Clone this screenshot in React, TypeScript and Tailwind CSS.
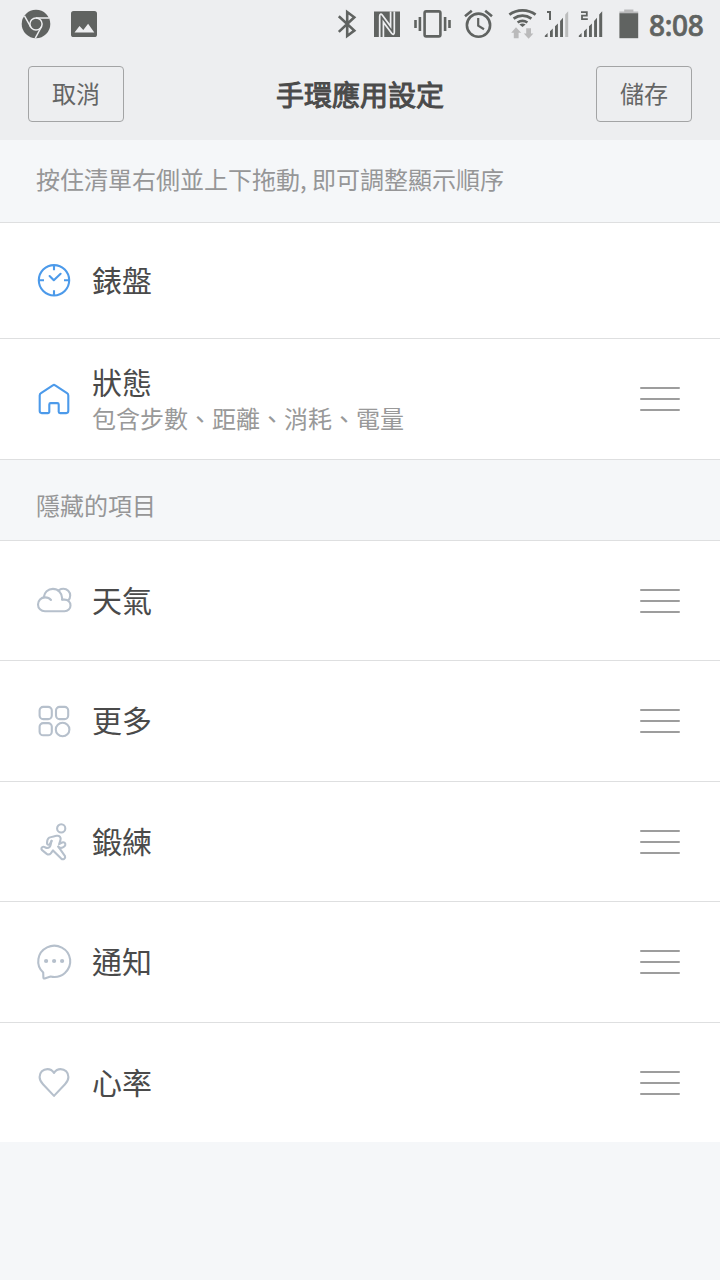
import React from 'react'

type IconProps = {
    className?: string
}

type Item = {
    title: string
    description?: string
    icon: React.FC<IconProps>
    active?: boolean
    draggable?: boolean
    height: string
}

const iconBase = {
    viewBox: '0 0 40 40',
    width: 40,
    height: 40,
    fill: 'none',
    stroke: 'currentColor',
    strokeWidth: 2.1,
    strokeLinecap: 'round' as const,
    strokeLinejoin: 'round' as const,
}

const ClockIcon = ({ className }: IconProps) => (
    <svg {...iconBase} viewBox="0 1 40 40" className={className}>
        <circle cx="20" cy="20.3" r="15.2" />
        <path strokeLinecap="butt" d="M20 5.3v5M20 30.3v5M5 20.3h5M30 20.3h5" />
        <path d="M15.6 16l4.2 4.2 6.8-6.4" />
    </svg>
)

const HomeIcon = ({ className }: IconProps) => (
    <svg {...iconBase} className={className}>
        <path d="M18.8 6.4a2 2 0 0 1 2.4 0l11.8 7.7a2.8 2.8 0 0 1 1.3 2.3v15.7a2 2 0 0 1-2 2h-6.2a1.4 1.4 0 0 1-1.4-1.4v-7.2a1.4 1.4 0 0 0-1.4-1.4h-6.6a1.4 1.4 0 0 0-1.4 1.4v7.2a1.4 1.4 0 0 1-1.4 1.4H7.7a2 2 0 0 1-2-2V16.4A2.8 2.8 0 0 1 7 14.1z" />
    </svg>
)

const CloudIcon = ({ className }: IconProps) => (
    <svg {...iconBase} viewBox="0 1 40 40" className={className}>
        <path d="M17 20C15.6 18.2 13.5 17.4 11 17.4c-4 0-7 3-7 7s3 6.9 7 6.9h19.6c3.3 0 5.9-2.6 5.9-5.9s-2.6-5.8-5.9-5.8h-2.6" />
        <path d="M9.7 17.3c.5-5 4.3-8.4 9.2-8.4 5.2 0 9.3 4.2 9.3 9.6v1" />
        <path d="M25 10.1c1.4-.9 2.8-1.3 4.4-1.3 3.8 0 6.8 3 6.8 6.7 0 2-.7 3.6-1.9 4.8" />
    </svg>
)

const MoreIcon = ({ className }: IconProps) => (
    <svg {...iconBase} className={className}>
        <rect x="5.6" y="5.9" width="12.2" height="12.2" rx="3.6" />
        <rect x="22" y="5.9" width="12.2" height="12.2" rx="3.6" />
        <rect x="5.6" y="22.1" width="12.2" height="12.2" rx="3.6" />
        <circle cx="28.6" cy="28.5" r="6.8" />
    </svg>
)

const RunIcon = ({ className }: IconProps) => (
    <svg {...iconBase} viewBox="-0.4 0.6 40 40" className={className}>
        <circle cx="26.8" cy="7" r="4.1" />
        <path d="M17.2 19.4l-2 3.6c-1.2.8-2.7.1-2.6-1.4.1-2.6.2-4.4 2.2-5.4 2-.9 4.6-1.1 7.4-1.8 2.8-.6 4.7 1.6 3.9 4l-1.4 4.4 3-1.7c1.7-.8 3.6.5 3.2 2.5-.4 1.8-3.1 3.1-5 2.9-1-.1-1.7-.7-2-1.3" />
        <path d="M17.2 19.4l-1.1 4.4c-.5 1.9-1.6 2.7-3.3 2.8-1.4.1-2.2-1.3-4-1.2-1.8.2-2.4 2.2-1.1 3.4l4.6 3.6c1.4 1 3.1.7 4.1-.5l2.2-2.9 8.2 8.2c2 1.6 4.7-.2 3.8-2.5l-6.7-9.4" />
    </svg>
)

const ChatIcon = ({ className }: IconProps) => (
    <svg {...iconBase} className={className}>
        <path d="M9.2 30.6A16 15.6 0 1 1 16.6 34.5L10.7 36.4c-.8.2-1.3-.2-1.3-.9z" />
        <g fill="currentColor" stroke="none">
            <circle cx="12.1" cy="19" r="2.1" />
            <circle cx="20.1" cy="19" r="2.1" />
            <circle cx="28.1" cy="19" r="2.1" />
        </g>
    </svg>
)

const HeartIcon = ({ className }: IconProps) => (
    <svg {...iconBase} viewBox="0 1 40 40" className={className}>
        <path d="M20 10.9c-1.6-2.5-3.9-3.8-6.6-3.8-4.4 0-7.8 3.4-7.8 7.9 0 3 1.2 5 3.4 7.3L20 33.9l11-11.6c2.2-2.3 3.4-4.3 3.4-7.3 0-4.5-3.4-7.9-7.8-7.9-2.7 0-5 1.3-6.6 3.8z" />
    </svg>
)

const DragHandle = () => (
    <svg width="40" height="26" viewBox="0 0 40 26" className="text-[#9d9d9d]" stroke="currentColor" strokeWidth="2" strokeLinecap="round">
        <path d="M1 2h38M1 13h38M1 24h38" />
    </svg>
)

const visibleItems: Item[] = [
    { title: '錶盤', icon: ClockIcon, active: true, height: 'h-[116px]' },
    {
        title: '狀態',
        description: '包含步數、距離、消耗、電量',
        icon: HomeIcon,
        active: true,
        draggable: true,
        height: 'h-[121px]',
    },
]

const hiddenItems: Item[] = [
    { title: '天氣', icon: CloudIcon, draggable: true, height: 'h-[120px]' },
    { title: '更多', icon: MoreIcon, draggable: true, height: 'h-[121px]' },
    { title: '鍛練', icon: RunIcon, draggable: true, height: 'h-[120px]' },
    { title: '通知', icon: ChatIcon, draggable: true, height: 'h-[121px]' },
    { title: '心率', icon: HeartIcon, draggable: true, height: 'h-[120px]' },
]

const ListItem = ({ item }: { item: Item }) => {
    const Icon = item.icon

    return (
        <li className={`flex items-center border-t border-[#dedfe0] bg-white pl-[34px] pr-10 ${item.height}`}>
            <Icon className={item.active ? 'text-[#4c9aea]' : 'text-[#b6c0cc]'} />
            <div className={`ml-[18px] mr-auto ${item.description ? 'pt-px' : 'pb-1'}`}>
                <p className="text-[30px] leading-9 text-[#4a4a4a]">{item.title}</p>
                {item.description && (
                    <p className="mt-px text-2xl leading-9 text-[#999999]">{item.description}</p>
                )}
            </div>
            {item.draggable && (
                <button aria-label="drag">
                    <DragHandle />
                </button>
            )}
        </li>
    )
}

const StatusBar = () => (
    <div className="flex h-12 text-[#606361]">
        <svg className="ml-5" width="32" height="48" viewBox="0 0 32 48" fill="none">
            <circle cx="16" cy="24" r="14.3" fill="currentColor" />
            <g stroke="#edeef0" strokeWidth="1.5">
                <circle cx="16" cy="24" r="6.1" />
                <path d="M16 17.9h13M10.7 27L4.5 15.8M21.3 27l-6 11.2" />
            </g>
        </svg>
        <svg className="ml-4" width="32" height="48" viewBox="0 0 32 48">
            <rect x="3" y="11" width="26" height="26" rx="2.6" fill="currentColor" />
            <path d="M6.5 32.4l5-6.5 3.8 4 4.8-6.2 6.2 8.7z" fill="#edeef0" />
        </svg>

        <svg className="ml-auto" width="26" height="48" viewBox="0 0 26 48" fill="none" stroke="currentColor" strokeWidth="2.6">
            <path d="M4.8 16.3L20.3 30.6 13.2 36V12l7.1 5.3L4.8 31.9" />
        </svg>
        <svg className="ml-3" width="30" height="48" viewBox="0 0 30 48">
            <path d="M2 11.5h26V37H2z" fill="currentColor" />
            <g fill="none" stroke="#edeef0" strokeWidth="1.7">
                <path d="M18.6 11.5v14.8L10.4 15.2c-1.5-2-2.7-1-2.7 1V37" />
                <path d="M11.4 37V22.2l8.2 11.1c1.5 2 2.7 1 2.7-1V11.5" />
            </g>
        </svg>
        <svg className="ml-2.5" width="41" height="48" viewBox="0 0 41 48" fill="none" stroke="currentColor" strokeWidth="2.6">
            <rect x="12.6" y="11.4" width="15.8" height="25" rx="1.6" />
            <path d="M7.9 17v14M3.5 20v8M33.1 17v14M37.5 20v8" />
        </svg>
        <svg className="ml-2.5" width="32" height="48" viewBox="0 0 32 48" fill="none" stroke="currentColor" strokeWidth="2.6">
            <circle cx="15.5" cy="25.2" r="11.6" />
            <path d="M15.2 18v7.6l5.8 3.6" strokeWidth="2.2" />
            <path d="M2 16.3l6.8-5.6M29 16.3l-6.8-5.6" />
        </svg>
        <svg className="ml-[11px]" width="33" height="48" viewBox="0 0 33 48" fill="none" stroke="currentColor" strokeWidth="2.7">
            <path d="M3.4 14.6c7.6-5.7 18.6-5.7 26.2 0M7.6 18.7c5.4-4 12.4-4 17.8 0M11.6 22.5c3-2.1 6.8-2.1 9.8 0" />
            <path d="M13.4 24.4c2-1.1 4.2-1.1 6.2 0L16.5 27z" fill="currentColor" stroke="none" />
            <path d="M10 27.2l5.2 5.6h-2.6v5.4H7.8v-5.4H5.2zM22.6 38.8l-4.8-5.4h2.4v-5.2h4.8v5.2h2.4z" fill="#bababb" stroke="none" />
        </svg>
        <svg className="ml-[5px]" width="26" height="48" viewBox="0 0 26 48">
            <path d="M3 12.1h3V20" fill="none" stroke="currentColor" strokeWidth="2" />
            <path d="M.8 37v-1.2L3.6 33v4zM6 37v-5.8l2.8-2.6V37zM11 37V26.2l2.9-2.8V37zM16.1 37V21l2.9-3.2V37z" fill="currentColor" />
            <path d="M21.2 37V14.4l3-3.2V37z" fill="#bcbdbd" />
        </svg>
        <svg className="ml-[7px]" width="27" height="48" viewBox="0 0 27 48">
            <path d="M4 12.1h5.8v3.5H5v3.6h5.8" fill="none" stroke="currentColor" strokeWidth="1.8" />
            <path d="M1.8 37v-1.2L4.6 33v4zM7 37v-5.8l2.8-2.6V37zM12 37V26.2l2.9-2.8V37zM17.1 37V21l2.9-3.2V37zM22.2 37V14.4l3-3.2V37z" fill="currentColor" />
        </svg>
        <svg className="ml-3.5" width="22" height="48" viewBox="0 0 22 48">
            <path d="M1.4 13.2v-1.6h4.8V9.4h9.2v2.2h4.8v1.6z" fill="#bababb" />
            <path d="M1.4 13.2h18.8v25H1.4z" fill="currentColor" />
        </svg>
        <span className="ml-[9px] mr-4 w-[55px] whitespace-nowrap pt-px font-['Noto_Sans',sans-serif] text-[28px] font-medium leading-[48px] tracking-[-0.3px] [-webkit-text-stroke:0.7px_#606361]">
            8:08
        </span>
    </div>
)

const HeaderButton = ({ children }: { children: React.ReactNode }) => (
    <button className="h-14 w-24 rounded border border-[#a3a4a5] pb-[3px] text-2xl leading-none text-[#646565]">
        {children}
    </button>
)

const App = () => {
    return (
        <div className="min-h-screen w-full bg-[#f5f7f9] font-['Noto_Sans_CJK_TC',sans-serif]">
            <header className="h-[140px] bg-[#edeef0]">
                <StatusBar />
                <div className="mt-[18px] flex items-center justify-between px-7">
                    <HeaderButton>取消</HeaderButton>
                    <h1 className="text-[28px] leading-[56px] text-[#4a4a4a] [-webkit-text-stroke:1px_#4a4a4a]">手環應用設定</h1>
                    <HeaderButton>儲存</HeaderButton>
                </div>
            </header>

            <p className="h-[82px] px-9 text-2xl leading-[78px] text-[#969697]">
                按住清單右側並上下拖動, 即可調整顯示順序
            </p>
            <ul>
                {visibleItems.map((item) => (
                    <ListItem key={item.title} item={item} />
                ))}
            </ul>

            <h2 className="h-[81px] border-t border-[#dedfe0] px-9 text-2xl leading-[89px] text-[#969697]">
                隱藏的項目
            </h2>
            <ul>
                {hiddenItems.map((item) => (
                    <ListItem key={item.title} item={item} />
                ))}
            </ul>
        </div>
    )
}

export default App
